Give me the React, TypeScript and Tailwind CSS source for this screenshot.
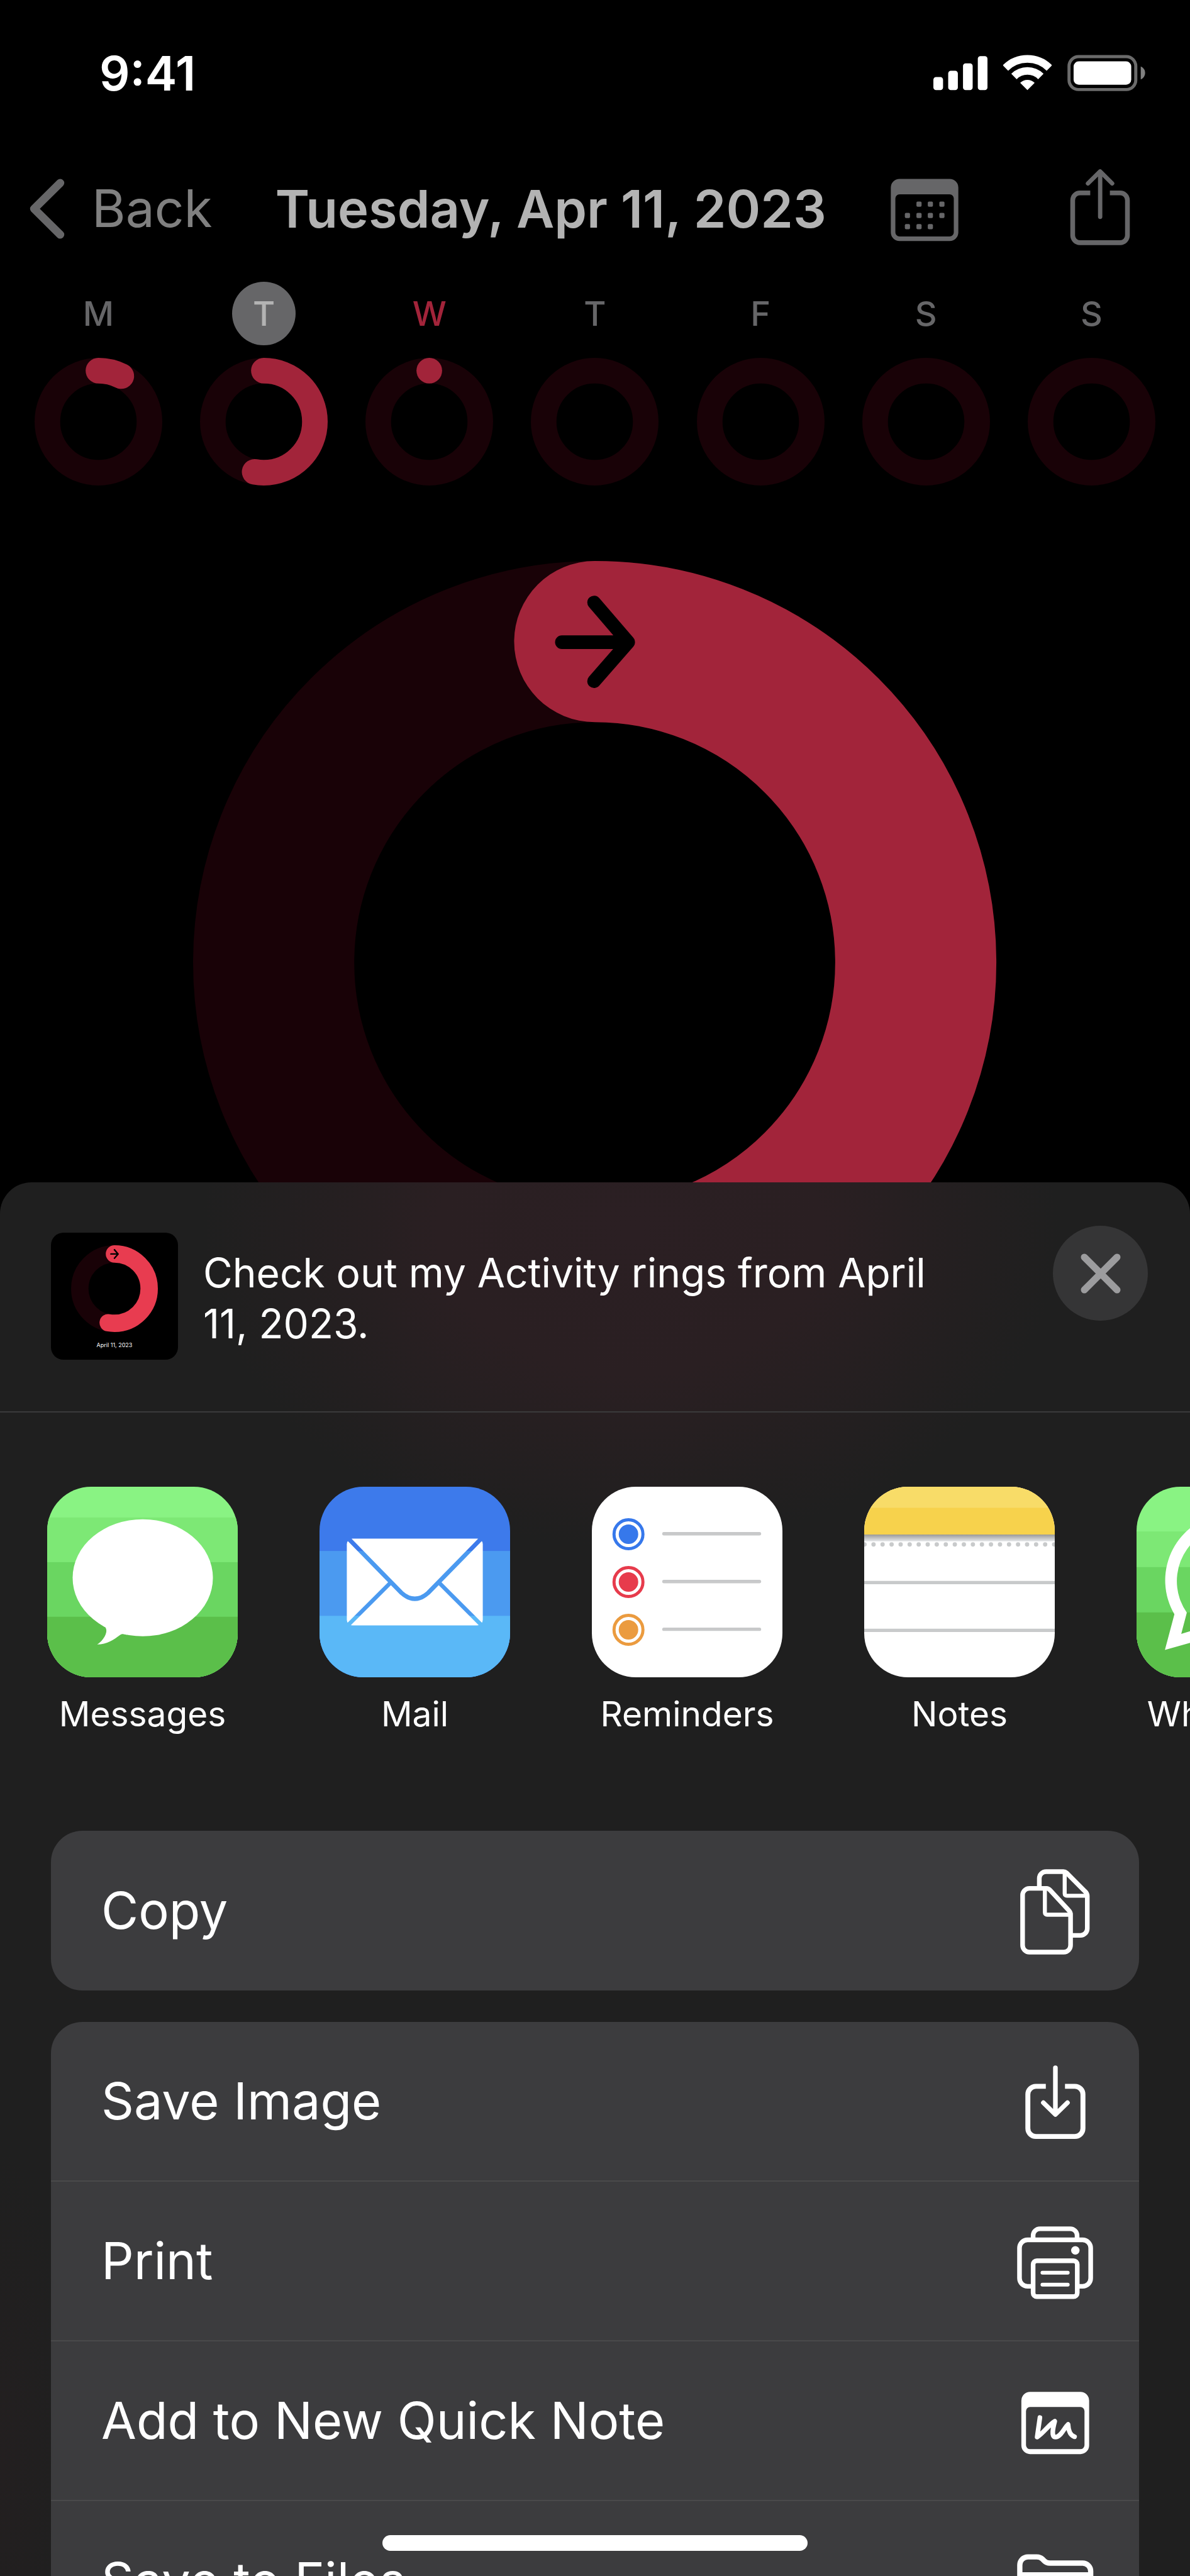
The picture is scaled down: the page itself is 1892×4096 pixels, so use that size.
import type { ReactNode } from 'react'

const days = [
  { label: 'M', progress: 7.4 },
  { label: 'T', progress: 52.8, selected: true },
  { label: 'W', progress: 0.01, today: true },
  { label: 'T', progress: 0 },
  { label: 'F', progress: 0 },
  { label: 'S', progress: 0 },
  { label: 'S', progress: 0 },
]

type RingProps = {
  progress: number
  arrow?: boolean
  color?: string
  className?: string
}

function Ring({ progress, arrow, color = '#a2243a', className }: RingProps) {
  return (
    <svg viewBox="0 0 1296 1296" fill="none" className={className} aria-hidden="true">
      <circle cx="648" cy="648" r="518" stroke="#190207" strokeWidth="260" />
      {progress > 0 && (
        <circle
          cx="648"
          cy="648"
          r="518"
          stroke={color}
          strokeWidth="260"
          strokeLinecap="round"
          pathLength="100"
          strokeDasharray={`${progress} 200`}
          transform="rotate(-90 648 648)"
        />
      )}
      {arrow && (
        <path
          d="M595 131H702M647 67L702 131L647 194"
          stroke="#000"
          strokeWidth="22"
          strokeLinecap="round"
          strokeLinejoin="round"
        />
      )}
    </svg>
  )
}

function StatusBar() {
  return (
    <div className="flex h-[232px] items-center justify-between pl-[158px] pr-[71px]">
      <span className="text-[76px] font-semibold leading-none">9:41</span>
      <div className="flex items-center gap-[25px]">
        <svg viewBox="255 85 263 176" className="h-[58px] w-[86px]" fill="#fff" aria-hidden="true">
          <rect x="255" y="193" width="47" height="63" rx="13" />
          <rect x="327" y="162" width="47" height="94" rx="13" />
          <rect x="399" y="126" width="47" height="130" rx="13" />
          <rect x="471" y="91" width="47" height="165" rx="13" />
        </svg>
        <svg viewBox="595 85 234 176" className="h-[58px] w-[77px]" fill="none" aria-hidden="true">
          <path d="M606 149A150 150 0 0 1 818 149" stroke="#fff" strokeWidth="37" />
          <path d="M647 190A92 92 0 0 1 777 190" stroke="#fff" strokeWidth="37" />
          <path d="M712 256L677 221A50 50 0 0 1 747 221Z" fill="#fff" />
        </svg>
        <svg viewBox="906 85 376 176" className="h-[58px] w-[124px]" fill="none" aria-hidden="true">
          <rect x="914" y="94" width="322" height="159" rx="46" stroke="#6b6b6b" strokeWidth="15" />
          <rect x="936" y="117" width="278" height="113" rx="25" fill="#fff" />
          <path d="M1260 142c14 6 21 18 21 31s-7 25-21 31z" fill="#808080" />
        </svg>
      </div>
    </div>
  )
}

function NavBar() {
  const dots = [
    [187, 808], [242, 808], [298, 808],
    [131, 863], [187, 863], [242, 863], [298, 863],
    [131, 917], [187, 917], [242, 917],
  ]
  return (
    <nav className="flex h-[200px] items-center pl-[45px] pr-[95px]">
      <button className="flex items-center gap-[43px] text-[82px] leading-none text-[#808080]">
        <svg viewBox="0 0 58 97" className="h-24 w-[58px]" fill="none" aria-hidden="true">
          <path d="M51 7L9 48.500L51 90" stroke="#666668" strokeWidth="13" strokeLinecap="round" strokeLinejoin="round" />
        </svg>
        Back
      </button>
      <h1 className="ml-[100px] whitespace-nowrap text-[83px] font-semibold leading-none text-[#b3b3b3]">
        Tuesday, Apr 11, 2023
      </h1>
      <div className="ml-auto flex items-center gap-[177px] text-[#666668]">
        <button aria-label="Calendar">
          <svg viewBox="50 630 329 402" className="h-[132px] w-[108px]" fill="currentColor" aria-hidden="true">
            <path
              fillRule="evenodd"
              d="M93 686H336a42 42 0 0 1 42 42V945a42 42 0 0 1-42 42H93a42 42 0 0 1-42-42V728a42 42 0 0 1 42-42ZM93 761a20 20 0 0 0-20 20V945a20 20 0 0 0 20 20H336a20 20 0 0 0 20-20V781a20 20 0 0 0-20-20Z"
            />
            {dots.map(([x, y]) => (
              <rect key={`${x}-${y}`} x={x - 12} y={y - 12} width="25" height="25" rx="6" />
            ))}
          </svg>
        </button>
        <button aria-label="Share">
          <svg viewBox="920 630 291 402" className="h-[132px] w-24" fill="none" stroke="currentColor" strokeWidth="23" aria-hidden="true">
            <path d="M1018 754H968a35 35 0 0 0-35 35V960a35 35 0 0 0 35 35H1163a35 35 0 0 0 35-35V789a35 35 0 0 0-35-35H1113" />
            <path d="M1066 870V652M1007 708L1066 650L1124 708" strokeWidth="21" strokeLinecap="round" strokeLinejoin="round" />
          </svg>
        </button>
      </div>
    </nav>
  )
}

function WeekStrip() {
  return (
    <ul className="flex justify-between px-[55px] pt-4">
      {days.map((day, i) => {
        let tone = 'text-[#666668]'
        if (day.selected) tone = 'bg-[#666668] text-[#b3b3b3]'
        if (day.today) tone = 'text-[#a2243a]'
        return (
          <li key={i} className="flex flex-col items-center gap-5">
            <span
              className={`flex size-[101px] items-center justify-center rounded-full text-[54px] font-medium leading-none ${tone}`}
            >
              {day.label}
            </span>
            <Ring progress={day.progress} className="size-[203px]" />
          </li>
        )
      })}
    </ul>
  )
}

function MessagesIcon() {
  return (
    <svg viewBox="0 0 307 307" aria-hidden="true">
      <rect width="307" height="307" fill="#89f383" />
      <rect y="49.500" width="307" height="258" fill="#7de875" />
      <rect y="121.500" width="307" height="186" fill="#6ad661" />
      <rect y="209.500" width="307" height="98" fill="#5bbf4a" />
      <ellipse cx="154" cy="146.700" rx="113" ry="94.300" fill="#fff" />
      <path d="M82 213C92 222 97 228 95 235C93 243 87 250 80.500 254C96 254 108 246 117 239C120 236.500 123 237 128 238.500L140 220L90 200Z" fill="#fff" />
    </svg>
  )
}

function MailIcon() {
  return (
    <svg viewBox="0 0 307 307" aria-hidden="true">
      <mask id="envelope">
        <rect x="44" y="83.500" width="219" height="140" rx="9" fill="#fff" />
        <path d="M44 81L132 171Q153.500 190 175 171L263 81" fill="none" stroke="#000" strokeWidth="7" />
        <path d="M44 225L115 154M263 225L192 154" stroke="#000" strokeWidth="6.500" />
      </mask>
      <rect width="307" height="307" fill="#3d7aeb" />
      <rect y="103.500" width="307" height="204" fill="#4b9af0" />
      <rect y="208" width="307" height="99" fill="#5ab8f7" />
      <rect width="307" height="307" fill="#fff" mask="url(#envelope)" />
    </svg>
  )
}

function RemindersIcon() {
  const items = [
    { y: 76.5, color: '#3678eb' },
    { y: 153.5, color: '#e73b4c' },
    { y: 230.5, color: '#eb9b3f' },
  ]
  return (
    <svg viewBox="0 0 307 307" aria-hidden="true">
      <rect width="307" height="307" fill="#fff" />
      {items.map(({ y, color }) => (
        <g key={color}>
          <circle cx="59" cy={y} r="23.300" fill="none" stroke={color} strokeWidth="5" />
          <circle cx="59" cy={y} r="15.700" fill={color} />
          <path d={`M116 ${y - 0.8}H270`} stroke="#c8c9ca" strokeWidth="5.400" strokeLinecap="round" />
        </g>
      ))}
    </svg>
  )
}

function NotesIcon() {
  return (
    <svg viewBox="0 0 307 307" aria-hidden="true">
      <defs>
        <linearGradient id="fold" x1="0" x2="0" y1="0" y2="1">
          <stop offset="0" stopColor="#999" />
          <stop offset="1" stopColor="#e6e8ea" />
        </linearGradient>
      </defs>
      <rect width="307" height="307" fill="#fff" />
      <rect width="307" height="77" fill="#f7d24c" />
      <rect width="307" height="34" fill="#f8dc68" />
      <rect y="77" width="307" height="11" fill="url(#fold)" />
      <path d="M0.500 93H307" stroke="#c8cacb" strokeWidth="7" strokeLinecap="round" strokeDasharray="0 14.550" />
      <path d="M0 154.400H307M0 231.400H307" stroke="#c8cacb" strokeWidth="5.400" />
    </svg>
  )
}

function WhatsAppIcon() {
  return (
    <svg viewBox="0 0 307 307" aria-hidden="true">
      <rect width="307" height="307" fill="#89f383" />
      <rect y="72" width="307" height="235" fill="#7de875" />
      <rect y="129.500" width="307" height="178" fill="#6ad661" />
      <rect y="202.500" width="307" height="105" fill="#5bbf4a" />
      <path
        fill="#fff"
        fillRule="evenodd"
        d="M45.700 262.800L61 205.500A108 108 0 1 1 104 246.500ZM72 237L81 203A89 89 0 1 1 106 227Z"
      />
      <path
        fill="#fff"
        d="M118 94c5 0 8 0 10 6l9 22c1 4-8 12-8 14 8 18 25 32 43 38 4 0 10-14 14-13l23 11c4 2 3 10 0 16-5 11-22 17-34 14-40-10-72-40-81-70-4-15 8-38 24-38Z"
      />
    </svg>
  )
}

const apps = [
  { name: 'Messages', icon: <MessagesIcon /> },
  { name: 'Mail', icon: <MailIcon /> },
  { name: 'Reminders', icon: <RemindersIcon /> },
  { name: 'Notes', icon: <NotesIcon /> },
  { name: 'WhatsApp', icon: <WhatsAppIcon /> },
]

function ActionRow({ label, children }: { label: string; children: ReactNode }) {
  return (
    <button className="flex h-[254px] w-full items-center justify-between border-b-2 border-[#4a4a4b] pl-20 pr-[71px] text-left text-[81px] leading-none last:border-b-0">
      {label}
      <svg
        viewBox="0 0 126 144"
        className="h-[142px] w-[124px]"
        fill="none"
        stroke="#fff"
        strokeWidth="7.500"
        aria-hidden="true"
      >
        {children}
      </svg>
    </button>
  )
}

function ShareSheet() {
  return (
    <section
      aria-label="Share"
      className="absolute inset-x-0 bottom-0 top-[1880px] overflow-hidden rounded-t-[50px] bg-[#1f1f1f] bg-[radial-gradient(36%_500px_at_53%_80px,#2b1f23_0%,#2a1f22_45%,#1f1f1f00_100%),radial-gradient(6%_500px_at_0%_92%,#231f20_0%,#1f1f1f00_100%)]"
    >
      <header className="flex h-[366px] items-start border-b-2 border-[#3a3a3b] pl-[81px] pr-[67px] pt-[69px]">
        <div className="mt-[11px] flex size-[202px] shrink-0 flex-col items-center rounded-[20px] bg-black pt-5">
          <Ring progress={52.8} arrow color="#e83c50" className="size-[138px]" />
          <span className="mt-4 text-[9px] leading-none">April 11, 2023</span>
        </div>
        <p className="ml-10 mt-[34px] max-w-[1190px] text-[64px] leading-[81px]">
          Check out my Activity rings from April 11, 2023.
        </p>
        <button
          aria-label="Close"
          className="ml-auto flex size-[151px] shrink-0 items-center justify-center rounded-full bg-[#353536]"
        >
          <svg viewBox="0 0 64 64" className="size-16" aria-hidden="true">
            <path d="M6 6L58 58M58 6L6 58" stroke="#9c9c9e" strokeWidth="11" strokeLinecap="round" />
          </svg>
        </button>
      </header>

      <div className="flex gap-[130px] overflow-hidden pl-[75px] pt-[118px]">
        {apps.map((app) => (
          <button key={app.name} className="flex w-[303px] shrink-0 flex-col items-center gap-[26px]">
            <span className="block w-full overflow-hidden rounded-[70px]">{app.icon}</span>
            <span className="text-[55px] leading-[64px]">{app.name}</span>
          </button>
        ))}
      </div>

      <div className="mx-[81px] mt-[154px] overflow-hidden rounded-[50px] bg-[#3c3c3e]">
        <ActionRow label="Copy">
          <path d="M49 36H21a11 11 0 0 0-11 11V128a11 11 0 0 0 11 11H76.500a11 11 0 0 0 11-11V78c0-2.500-1-4.500-3-6.500L54 38.500C52.500 37 51 36 49 36Z" />
          <path d="M46 37V75c0 2.200 1.400 3.600 3.600 3.600H86" strokeWidth="6.500" />
          <path d="M37 36V20a11 11 0 0 1 11-11H76c2 0 3.600.700 5 2L111 41c2.300 2.200 3.500 4.500 3.500 7.500V101a11 11 0 0 1-11 11H88" />
          <path d="M78 10V44.500c0 2.200 1.400 3.500 3.600 3.500H113" strokeWidth="6.500" />
        </ActionRow>
      </div>

      <div className="mx-[81px] mt-[50px] overflow-hidden rounded-t-[50px] bg-[#3c3c3e]">
        <ActionRow label="Save Image">
          <path d="M47.500 48H31.500a13 13 0 0 0-13 13V116a13 13 0 0 0 13 13H94.500a13 13 0 0 0 13-13V61a13 13 0 0 0-13-13H78.500" strokeWidth="8" />
          <path d="M63 18V92M43.500 74.500L63 93.500L82.500 74.500" strokeLinecap="round" strokeLinejoin="round" />
        </ActionRow>
        <ActionRow label="Print">
          <path d="M27 38V31a11 11 0 0 1 11-11H87a11 11 0 0 1 11 11V38" />
          <path d="M27 113H18a13 13 0 0 1-13-13V51a13 13 0 0 1 13-13H107a13 13 0 0 1 13 13V100a13 13 0 0 1-13 13H98" />
          <rect x="27" y="71.700" width="71.300" height="58" rx="6" />
          <path d="M42 91H83M42 110.300H83" strokeWidth="6" strokeLinecap="round" />
          <circle cx="95.200" cy="55" r="6.800" fill="#fff" stroke="none" />
        </ActionRow>
        <ActionRow label="Add to New Quick Note">
          <path
            d="M22 25.500H103.500a14 14 0 0 1 14 14V112a14 14 0 0 1-14 14H22a14 14 0 0 1-14-14V39.500a14 14 0 0 1 14-14ZM22 50a6.500 6.500 0 0 0-6.500 6.500V111.500a6.500 6.500 0 0 0 6.500 6.500H103.500a6.500 6.500 0 0 0 6.500-6.500V56.500a6.500 6.500 0 0 0-6.500-6.500Z"
            fill="#fff"
            fillRule="evenodd"
            stroke="none"
          />
          <path
            d="M38 67L33.500 98.500C44 92 52 79 62 73C59 84 56 98.500 63 98.500C72 98 77 84 83.500 78C84 87 87 96 94 98"
            strokeLinecap="round"
            strokeLinejoin="round"
          />
        </ActionRow>
        <ActionRow label="Save to Files">
          <path
            d="M5.500 61V46a13 13 0 0 1 13-13H33c4 0 6.500 1 9 3.500L45 39.500c2.500 2.500 5 3.500 9 3.500H107a13 13 0 0 1 13 13V112a13 13 0 0 1-13 13H18.500a13 13 0 0 1-13-13ZM5.500 62H120"
            strokeWidth="8.500"
          />
        </ActionRow>
      </div>
    </section>
  )
}

export default function App() {
  return (
    <main className="relative h-screen overflow-hidden bg-black font-['Inter',sans-serif] text-white">
      <StatusBar />
      <NavBar />
      <WeekStrip />
      <Ring progress={52.8} arrow className="mx-auto mt-[120px] w-[67.5%]" />
      <ShareSheet />
      <div className="absolute bottom-10 left-1/2 h-[25px] w-[676px] -translate-x-1/2 rounded-full bg-white" />
    </main>
  )
}
